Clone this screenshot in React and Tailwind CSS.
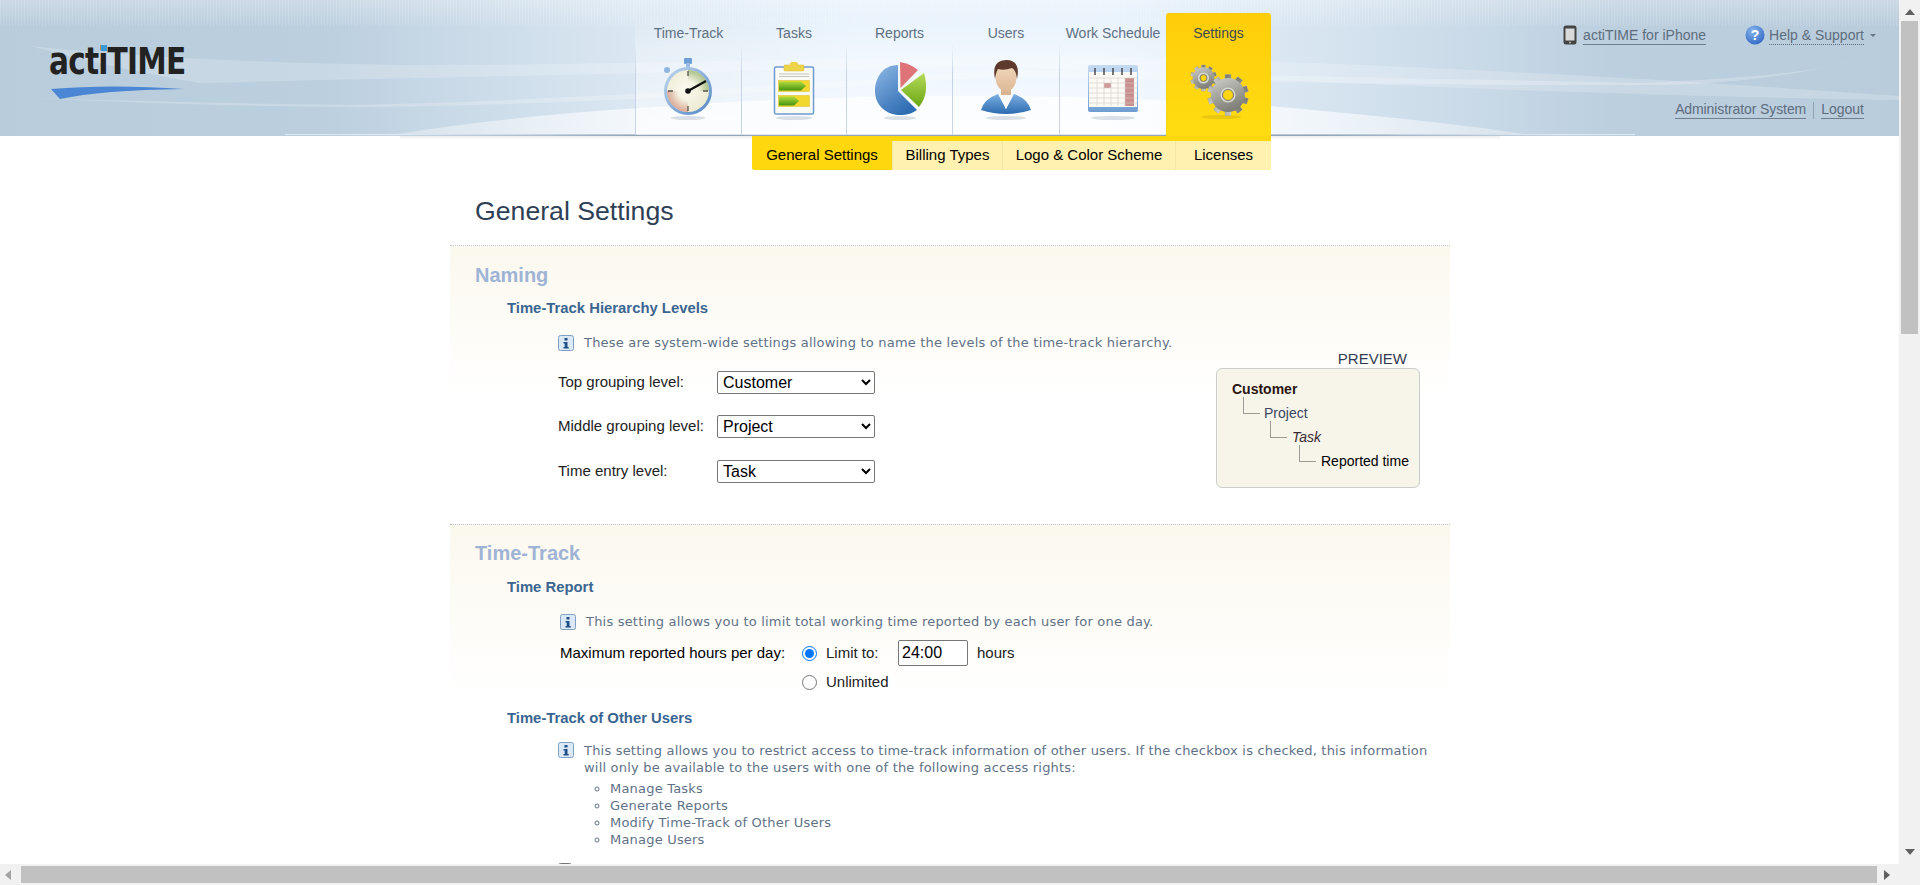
import React from 'react';

const gearTeeth = [0, 36, 72, 108, 144, 180, 216, 252, 288, 324];

const Stopwatch = () => (
  <svg viewBox="0 0 60 66" className="w-[60px] h-[66px]">
    <defs>
      <linearGradient id="swRim" x1="0" y1="0" x2="1" y2="1">
        <stop offset="0" stopColor="#c4d8f0" />
        <stop offset="1" stopColor="#4f86c6" />
      </linearGradient>
      <radialGradient id="swFace" cx="0.45" cy="0.45" r="0.6">
        <stop offset="0" stopColor="#fbfaf0" />
        <stop offset="1" stopColor="#ece9d0" />
      </radialGradient>
      <radialGradient id="swGreen" gradientUnits="userSpaceOnUse" cx="29" cy="36" r="21">
        <stop offset="0.45" stopColor="#b6c99a" stopOpacity="0" />
        <stop offset="1" stopColor="#a9c088" />
      </radialGradient>
      <radialGradient id="swRed" gradientUnits="userSpaceOnUse" cx="29" cy="36" r="21">
        <stop offset="0.45" stopColor="#dfb3a3" stopOpacity="0" />
        <stop offset="1" stopColor="#dca898" />
      </radialGradient>
    </defs>
    <ellipse cx="29" cy="63" rx="17" ry="2" fill="#8a9bb0" opacity="0.3" />
    <rect x="25" y="3" width="8" height="6" rx="1" fill="#6f9fd8" />
    <rect x="27" y="8" width="4" height="5" fill="#9bbce4" />
    <circle cx="8" cy="15" r="3" fill="#8fb4e0" />
    <circle cx="29" cy="36" r="24" fill="url(#swRim)" />
    <circle cx="29" cy="36" r="21" fill="url(#swFace)" />
    <path d="M29 36 L29 15 A21 21 0 0 1 50 36 Z" fill="url(#swGreen)" />
    <path d="M29 36 L29 57 A21 21 0 0 1 8 36 Z" fill="url(#swRed)" />
    <path d="M29 16v5M29 51v5M9 36h5M44 36h5" stroke="#55554c" strokeWidth="1.300" />
    <path d="M29 36 L47 26" stroke="#111" strokeWidth="2.200" />
    <circle cx="29" cy="36" r="2.800" fill="#111" />
  </svg>
);

const Clipboard = () => (
  <svg viewBox="0 0 60 66" className="w-[60px] h-[66px]">
    <defs>
      <linearGradient id="cbGreen" x1="0" y1="0" x2="0" y2="1">
        <stop offset="0" stopColor="#b2dc3e" />
        <stop offset="1" stopColor="#46940f" />
      </linearGradient>
    </defs>
    <ellipse cx="30" cy="63" rx="18" ry="2" fill="#8a9bb0" opacity="0.3" />
    <rect x="10.500" y="12" width="39" height="47" rx="1.500" fill="#fbfbf6" stroke="#6d9bd1" strokeWidth="1.500" />
    <rect x="20" y="10" width="20" height="6" rx="1" fill="#ecd34a" stroke="#d6b92a" strokeWidth="0.500" />
    <rect x="26" y="7" width="8" height="5" rx="2" fill="#ecd34a" />
    <path d="M15 19h30M15 21.500h30" stroke="#c4c4bc" strokeWidth="1.200" />
    <rect x="14.500" y="25.500" width="31" height="11" fill="#f2d72e" stroke="#d6bb22" strokeWidth="0.500" />
    <path d="M15 26.500h22l5 4.500 -5 4.500h-22z" fill="url(#cbGreen)" />
    <rect x="14.500" y="40.500" width="31" height="11" fill="#f2d72e" stroke="#d6bb22" strokeWidth="0.500" />
    <path d="M15 41.500h15l5 4.500 -5 4.500h-15z" fill="url(#cbGreen)" />
  </svg>
);

const Pie = () => (
  <svg viewBox="0 0 60 66" className="w-[60px] h-[66px]">
    <defs>
      <linearGradient id="pieBlue" x1="0" y1="0" x2="0.6" y2="1">
        <stop offset="0" stopColor="#8fb9e6" />
        <stop offset="1" stopColor="#2f6db3" />
      </linearGradient>
      <linearGradient id="pieGreen" x1="0" y1="0" x2="0" y2="1">
        <stop offset="0" stopColor="#b5db5a" />
        <stop offset="1" stopColor="#6aa612" />
      </linearGradient>
    </defs>
    <ellipse cx="30" cy="63" rx="16" ry="2" fill="#8a9bb0" opacity="0.3" />
    <path d="M28 36 L28 10 C12 10 5 24 5 36 C5 50 16 60 30 60 C37 60 43 58 47 55 Z" fill="url(#pieBlue)" />
    <path d="M30 7 Q41 9 48 15 L30.500 33 Z" fill="#de7478" />
    <path d="M31 35 L54 18 Q60 38 49 52 Z" fill="url(#pieGreen)" />
  </svg>
);

const UserIcon = () => (
  <svg viewBox="0 0 60 66" className="w-[60px] h-[66px]">
    <defs>
      <linearGradient id="suit" x1="0" y1="0" x2="0" y2="1">
        <stop offset="0" stopColor="#7db0e2" />
        <stop offset="1" stopColor="#2d6bb0" />
      </linearGradient>
      <linearGradient id="skin" x1="0" y1="0" x2="0" y2="1">
        <stop offset="0" stopColor="#f6dcc0" />
        <stop offset="1" stopColor="#dcb896" />
      </linearGradient>
    </defs>
    <ellipse cx="30" cy="63" rx="20" ry="2" fill="#8a9bb0" opacity="0.3" />
    <path d="M5 55 Q8 44 22 39 L30 54 L38 39 Q52 44 55 55 Q30 63 5 55 Z" fill="url(#suit)" />
    <path d="M24 39 L30 54 L36 39 Q30 43 24 39 Z" fill="#f8f8f8" />
    <rect x="25" y="30" width="10" height="10" fill="#d8b490" />
    <ellipse cx="30" cy="22" rx="10.500" ry="14.500" fill="url(#skin)" />
    <path d="M19 24 Q15 5 31 5 Q45 6 41 24 Q40 15 36 13 Q28 16 22 14 Q20 17 19 24 Z" fill="#5e3a2c" />
  </svg>
);

const Calendar = () => (
  <svg viewBox="0 0 60 66" className="w-[60px] h-[66px]">
    <defs>
      <linearGradient id="calTop" x1="0" y1="0" x2="0" y2="1">
        <stop offset="0" stopColor="#c6dbf2" />
        <stop offset="1" stopColor="#6f9dd2" />
      </linearGradient>
    </defs>
    <ellipse cx="30" cy="63" rx="22" ry="2" fill="#8a9bb0" opacity="0.3" />
    <rect x="5" y="10" width="50" height="47" rx="2" fill="url(#calTop)" />
    <rect x="6" y="17" width="48" height="35" fill="#fbfaf5" />
    <rect x="21" y="28" width="7" height="5" fill="#d29a9b" />
    <rect x="42" y="23" width="9" height="28" fill="#cb8f90" />
    <path d="M14 23v28M21 23v28M28 23v28M35 23v28M42 23v28M6 23h48M6 28h48M6 33h48M6 38h48M6 43h48M6 48h48" stroke="#d5cfc8" strokeWidth="0.600" />
    <path d="M12 13v7M21 13v7M30 13v7M39 13v7M48 13v7" stroke="#333" strokeWidth="1.300" />
  </svg>
);

const Gear = ({ cx, cy, r, hole, id }) => (
  <g>
    {gearTeeth.map((a) => (
      <rect
        key={a}
        x={cx - r * 0.17}
        y={cy - r * 1.14}
        width={r * 0.34}
        height={r * 2.28}
        fill={`url(#${id})`}
        transform={`rotate(${a} ${cx} ${cy})`}
      />
    ))}
    <circle cx={cx} cy={cy} r={r * 0.94} fill={`url(#${id})`} />
    <circle cx={cx} cy={cy} r={hole + 2} fill="#d9d9d4" />
    <circle cx={cx} cy={cy} r={hole} fill="#fcd512" stroke="#77776f" strokeWidth="1" />
  </g>
);

const Gears = () => (
  <svg viewBox="0 0 60 66" className="w-[60px] h-[66px]">
    <defs>
      <linearGradient id="gearG" x1="0" y1="0" x2="0.4" y2="1">
        <stop offset="0" stopColor="#cfcfca" />
        <stop offset="1" stopColor="#808078" />
      </linearGradient>
    </defs>
    <ellipse cx="32" cy="62" rx="20" ry="2" fill="#b79a10" opacity="0.3" />
    <Gear cx={14.500} cy={23} r={11.500} hole={3.500} id="gearG" />
    <Gear cx={39} cy={40} r={18} hole={5.500} id="gearG" />
  </svg>
);

const PhoneIcon = () => (
  <svg viewBox="0 0 14 20" className="w-[14px] h-[20px]">
    <rect x="0.500" y="0.500" width="13" height="19" rx="2.500" fill="#444" />
    <rect x="2.500" y="3.500" width="9" height="12" fill="#d9d9d9" />
    <circle cx="7" cy="17.500" r="1" fill="#bbb" />
  </svg>
);

const HelpIcon = () => (
  <svg viewBox="0 0 20 20" className="w-[20px] h-[20px]">
    <defs>
      <radialGradient id="helpG" cx="0.4" cy="0.3" r="0.8">
        <stop offset="0" stopColor="#8ab6ef" />
        <stop offset="1" stopColor="#2a63c0" />
      </radialGradient>
    </defs>
    <circle cx="10" cy="10" r="9.500" fill="url(#helpG)" />
    <text x="10" y="15" textAnchor="middle" fontSize="14" fontWeight="700" fill="#fff" fontFamily="Liberation Sans">?</text>
  </svg>
);

const InfoIcon = () => (
  <svg viewBox="0 0 16 16" className="w-[16px] h-[16px] shrink-0">
    <rect x="0.500" y="0.500" width="15" height="15" rx="2" fill="#dbe8f6" stroke="#7f9fc4" />
    <rect x="6.500" y="3" width="3" height="2.500" fill="#1f4f86" />
    <path d="M5.500 7h4v5h1.200v1.500h-5.200V12h1.200V8.500h-1.200z" fill="#1f4f86" />
  </svg>
);

// wave background of the header bar
const HeaderBg = () => (
  <svg className="absolute inset-0 w-full h-full" viewBox="0 0 1899 136" preserveAspectRatio="none">
    <defs>
      <linearGradient id="hdrBase" x1="0" y1="0" x2="1" y2="0">
        <stop offset="0" stopColor="#b9ccdc" />
        <stop offset="0.17" stopColor="#bccfdf" />
        <stop offset="0.33" stopColor="#dae7f2" />
        <stop offset="0.45" stopColor="#e8f3fc" />
        <stop offset="0.58" stopColor="#e8f3fc" />
        <stop offset="0.7" stopColor="#d6e4f0" />
        <stop offset="0.85" stopColor="#bccfdf" />
        <stop offset="1" stopColor="#b9ccdc" />
      </linearGradient>
      <linearGradient id="hdrFade" x1="0" y1="0" x2="0" y2="1">
        <stop offset="0" stopColor="#fff" stopOpacity="0.25" />
        <stop offset="1" stopColor="#fff" stopOpacity="0" />
      </linearGradient>
      <linearGradient id="hdrLine" x1="0" y1="0" x2="1" y2="0">
        <stop offset="0" stopColor="#93a5b8" stopOpacity="0" />
        <stop offset="0.2" stopColor="#93a5b8" />
        <stop offset="0.8" stopColor="#93a5b8" />
        <stop offset="1" stopColor="#93a5b8" stopOpacity="0" />
      </linearGradient>
      <linearGradient id="hdrWedge" x1="0" y1="0" x2="1" y2="0">
        <stop offset="0" stopColor="#fff" stopOpacity="0.3" />
        <stop offset="0.25" stopColor="#fff" stopOpacity="0.72" />
        <stop offset="0.75" stopColor="#fff" stopOpacity="0.72" />
        <stop offset="1" stopColor="#fff" stopOpacity="0.3" />
      </linearGradient>
      <pattern id="hdrStripes" width="3" height="26" patternUnits="userSpaceOnUse">
        <rect width="1" height="26" fill="#fff" />
      </pattern>
    </defs>
    <rect width="1899" height="136" fill="url(#hdrBase)" />
    <rect width="1899" height="26" fill="url(#hdrStripes)" opacity="0.12" />
    <rect width="1899" height="26" fill="url(#hdrFade)" />
    <path d="M30 46 Q180 62 400 65 Q520 66 1000 55 Q1400 60 1899 96 L1899 100 Q1500 94 1000 66 Q500 76 200 83 Q120 70 30 46 Z" fill="#fff" opacity="0.2" />
    <path d="M30 98 Q200 103 350 105 Q600 100 1000 70 Q1400 78 1640 83 Q1800 76 1850 62 Q1750 86 1640 85 Q1400 86 1000 76 Q600 106 350 107 Q200 106 30 98 Z" fill="#fff" opacity="0.22" />
    <path d="M390 135 Q520 115 640 108 Q950 84 1280 107 Q1450 122 1530 135 Z" fill="url(#hdrWedge)" />
    <rect x="285" y="134" width="1350" height="1" fill="#dfe9f3" />
    <rect x="400" y="134.500" width="1160" height="1.500" fill="url(#hdrLine)" />
  </svg>
);

const tabs = [
  { label: 'Time-Track', icon: <Stopwatch />, width: 'w-[106px]' },
  { label: 'Tasks', icon: <Clipboard />, width: 'w-[105px]' },
  { label: 'Reports', icon: <Pie />, width: 'w-[106px]' },
  { label: 'Users', icon: <UserIcon />, width: 'w-[107px]' },
  { label: 'Work Schedule', icon: <Calendar />, width: 'w-[107px]' },
];

const subTabs = [
  { label: 'General Settings', width: 'w-[140px]', active: true },
  { label: 'Billing Types', width: 'w-[110px]' },
  { label: 'Logo & Color Scheme', width: 'w-[173px]' },
  { label: 'Licenses', width: 'w-[96px]' },
];

const App = () => {
  return (
    <div className="h-[885px] w-[1920px] overflow-hidden flex flex-col bg-white font-['Liberation_Sans',Arial,sans-serif] text-[15px] text-[#222]">
      <div className="flex h-[864px]">
        <div className="w-[1899px] h-[864px] overflow-hidden">
          {/* header */}
          <div className="relative h-[136px] flex text-[14px]">
            <HeaderBg />
            <div className="relative w-[635px] pl-[49px] pt-[38px]">
              <div className="relative w-[136px]">
                <span className="block origin-left scale-x-[0.8] whitespace-nowrap font-['DejaVu_Sans',sans-serif] font-bold text-[37px] leading-[48px] tracking-[-1px] text-[#222]">actiTIME</span>
                <span className="absolute left-[52px] top-[7px] w-[6px] h-[6px] bg-[#3a9ad9]"></span>
                <svg viewBox="0 0 134 14" className="w-[134px] h-[14px] ml-[2px] -mt-[1px]">
                  <path d="M0 4 Q60 -1 133 4 Q50 5 9 14 Z" fill="#4a86d4" />
                </svg>
              </div>
            </div>
            <div className="relative flex pt-[13px]">
              {tabs.map((tab) => (
                <div key={tab.label} className={`${tab.width} h-[122px] flex bg-[linear-gradient(rgba(255,255,255,0),rgba(255,255,255,0.32)_30%,rgba(255,255,255,0.55))]`}>
                  <span className="w-px h-full bg-gradient-to-b from-transparent from-[25%] to-[#c6d4e6] to-[50%]"></span>
                  <div className="flex-1 flex flex-col items-center pt-[10px]">
                    <span className="h-[20px] leading-[20px] whitespace-nowrap text-[#5f7083]">{tab.label}</span>
                    <div className="mt-[12px]">{tab.icon}</div>
                  </div>
                </div>
              ))}
              <div className="w-[105px] h-[123px] flex flex-col items-center pt-[10px] rounded-t-[3px] bg-gradient-to-b from-[#ffcd0a] to-[#ffdc12]">
                <span className="h-[20px] leading-[20px] whitespace-nowrap text-[#3d4a50]">Settings</span>
                <div className="mt-[12px]"><Gears /></div>
              </div>
            </div>
            <div className="relative flex-1 flex flex-col items-end pr-[35px] text-[#5d6d7d]">
              <div className="flex items-center mt-[25px] h-[20px]">
                <PhoneIcon />
                <span className="ml-[6px] leading-[17px] border-b border-[#6f7f8f] mt-[1px]">actiTIME for iPhone</span>
                <div className="ml-[39px]"><HelpIcon /></div>
                <span className="ml-[4px] leading-[17px] border-b border-dotted border-[#5d6d7d] mt-[1px]">Help &amp; Support</span>
                <span className="ml-[6px] -mr-[12px] w-0 h-0 border-x-[3px] border-x-transparent border-t-[3px] border-t-[#6a7785]"></span>
              </div>
              <div className="flex items-center mt-[55px] h-[20px]">
                <span className="leading-[17px] tracking-[-0.1px] border-b border-[#6f7f8f]">Administrator System</span>
                <span className="mx-[7px] w-px h-[17px] bg-[#93a3b3]"></span>
                <span className="leading-[17px] border-b border-[#6f7f8f]">Logout</span>
              </div>
            </div>
            <div className="absolute left-[400px] top-[136px] w-[1100px] h-[4px] bg-gradient-to-b from-[#eeeeee] to-white"></div>
          </div>

          {/* sub navigation */}
          <div className="relative ml-[752px] w-[519px] h-[34px] flex items-stretch rounded-b-[3px] overflow-hidden bg-[#ffd70f] pt-[5px]">
            {subTabs.map((tab) => (
              <div
                key={tab.label}
                className={`${tab.width} flex items-center justify-center whitespace-nowrap text-black ${tab.active ? 'bg-[#ffd70f]' : 'bg-[#fff2b0] border-l border-[#f3e6a6]'}`}
              >
                {tab.label}
              </div>
            ))}
          </div>

          {/* page body */}
          <div className="ml-[450px] w-[1000px]">
            <h1 className="h-[75px] pt-[23px] pl-[25px] text-[26.670px] leading-[36px] font-normal text-[#2f3f56]">General Settings</h1>

            <section className="h-[279px] border-t border-dotted border-[#c4c4c4] bg-[linear-gradient(#fbf8ee,#ffffff_150px)] pt-[17px]">
              <h2 className="pl-[25px] h-[24px] leading-[24px] text-[20px] font-bold text-[#9fb4d5]">Naming</h2>
              <h3 className="pl-[57px] mt-[11px] h-[20px] leading-[20px] text-[14.850px] font-bold text-[#3a6591]">Time-Track Hierarchy Levels</h3>
              <div className="mt-[17px] flex justify-between">
                <div className="pl-[108px]">
                  <div className="flex items-center h-[16px] font-['DejaVu_Sans',sans-serif] text-[13px] tracking-[0.2px] text-[#5f7287]">
                    <InfoIcon />
                    <span className="ml-[10px] whitespace-nowrap">These are system-wide settings allowing to name the levels of the time-track hierarchy.</span>
                  </div>
                  <div className="mt-[20px] flex items-center h-[22px]">
                    <span className="w-[159px]">Top grouping level:</span>
                    <select className="w-[158px] h-[23px] pl-[1px] bg-white border border-[#767676] rounded-[2px] text-[16px] text-black" defaultValue="Customer">
                      <option>Customer</option>
                    </select>
                  </div>
                  <div className="mt-[22px] flex items-center h-[22px]">
                    <span className="w-[159px]">Middle grouping level:</span>
                    <select className="w-[158px] h-[23px] pl-[1px] bg-white border border-[#767676] rounded-[2px] text-[16px] text-black" defaultValue="Project">
                      <option>Project</option>
                    </select>
                  </div>
                  <div className="mt-[23px] flex items-center h-[22px]">
                    <span className="w-[159px]">Time entry level:</span>
                    <select className="w-[158px] h-[23px] pl-[1px] bg-white border border-[#767676] rounded-[2px] text-[16px] text-black" defaultValue="Task">
                      <option>Task</option>
                    </select>
                  </div>
                </div>
                <div className="w-[204px] mr-[30px] pt-[15px] text-[14px]">
                  <div className="h-[18px] leading-[18px] text-[15px] text-right pr-[13px] text-[#333b50]">PREVIEW</div>
                  <div className="h-[120px] rounded-[6px] border border-[#cdcdc8] bg-[#f7f4ea] pt-[8px] pl-[15px] leading-[24px]">
                    <div className="h-[24px] font-bold text-[#2a1410]">Customer</div>
                    <div className="h-[24px] flex items-center pl-[11px] text-[#3b4660]">
                      <span className="w-[17px] h-[17px] -mt-[16px] border-l border-b border-[#9a9a96]"></span>
                      <span className="ml-[4px]">Project</span>
                    </div>
                    <div className="h-[24px] flex items-center pl-[38px] italic text-[#3a2a30]">
                      <span className="w-[17px] h-[17px] -mt-[16px] border-l border-b border-[#9a9a96]"></span>
                      <span className="ml-[5px]">Task</span>
                    </div>
                    <div className="h-[24px] flex items-center pl-[67px] whitespace-nowrap text-black">
                      <span className="w-[17px] h-[17px] -mt-[16px] border-l border-b border-[#9a9a96]"></span>
                      <span className="ml-[5px]">Reported time</span>
                    </div>
                  </div>
                </div>
              </div>
            </section>

            <section className="border-t border-dotted border-[#c4c4c4] bg-[linear-gradient(#fbf8ee,#ffffff_170px)] pt-[16px]">
              <h2 className="pl-[25px] h-[24px] leading-[24px] text-[20px] font-bold text-[#9fb4d5]">Time-Track</h2>
              <h3 className="pl-[57px] mt-[12px] h-[20px] leading-[20px] text-[14.850px] font-bold text-[#3a6591]">Time Report</h3>
              <div className="pl-[110px] mt-[17px] flex items-center h-[16px] font-['DejaVu_Sans',sans-serif] text-[13px] tracking-[0.2px] text-[#5f7287]">
                <InfoIcon />
                <span className="ml-[10px] whitespace-nowrap">This setting allows you to limit total working time reported by each user for one day.</span>
              </div>
              <div className="pl-[110px] mt-[10px] flex items-center h-[26px]">
                <span className="w-[242px] whitespace-nowrap text-black">Maximum reported hours per day:</span>
                <input type="radio" name="limit" defaultChecked className="w-[15px] h-[15px] m-0" />
                <span className="ml-[9px] w-[72px]">Limit to:</span>
                <input type="text" defaultValue="24:00" className="w-[70px] h-[26px] px-[3px] bg-white border border-[#767676] rounded-[2px] text-[16px] text-black" />
                <span className="ml-[9px]">hours</span>
              </div>
              <div className="pl-[352px] mt-[5px] flex items-center h-[22px]">
                <input type="radio" name="limit" className="w-[15px] h-[15px] m-0" />
                <span className="ml-[9px]">Unlimited</span>
              </div>
              <h3 className="pl-[57px] mt-[15px] h-[20px] leading-[20px] text-[14.850px] font-bold text-[#3a6591]">Time-Track of Other Users</h3>
              <div className="pl-[108px] mt-[14px] flex items-start font-['DejaVu_Sans',sans-serif] text-[13px] leading-[17px] tracking-[0.2px] text-[#5f7287]">
                <InfoIcon />
                <div className="ml-[10px]">
                  <p className="whitespace-nowrap">This setting allows you to restrict access to time-track information of other users. If the checkbox is checked, this information<br />will only be available to the users with one of the following access rights:</p>
                  <ul className="mt-[4px] ml-[26px] list-[circle]">
                    <li>Manage Tasks</li>
                    <li>Generate Reports</li>
                    <li>Modify Time-Track of Other Users</li>
                    <li>Manage Users</li>
                  </ul>
                </div>
              </div>
              <div className="pl-[108px] mt-[15px] flex items-center">
                <input type="checkbox" className="w-[14px] h-[14px] m-0" />
              </div>
            </section>
          </div>
        </div>

        {/* vertical scrollbar */}
        <div className="w-[21px] h-[864px] bg-[#f1f1f1] flex flex-col items-center pt-[9px]">
          <span className="w-0 h-0 border-x-[5px] border-x-transparent border-b-[6px] border-b-[#606060]"></span>
          <div className="mt-[6px] w-[17px] h-[313px] bg-[#c1c1c1]"></div>
          <span className="mt-auto mb-[9px] w-0 h-0 border-x-[5px] border-x-transparent border-t-[6px] border-t-[#606060]"></span>
        </div>
      </div>

      {/* horizontal scrollbar */}
      <div className="h-[21px] bg-[#f1f1f1] flex items-center">
        <span className="ml-[5px] w-0 h-0 border-y-[5px] border-y-transparent border-r-[6px] border-r-[#a3a3a3]"></span>
        <div className="ml-[10px] w-[1856px] h-[17px] bg-[#c1c1c1]"></div>
        <span className="ml-[7px] w-0 h-0 border-y-[5px] border-y-transparent border-l-[6px] border-l-[#606060]"></span>
      </div>
    </div>
  );
};

export default App;
